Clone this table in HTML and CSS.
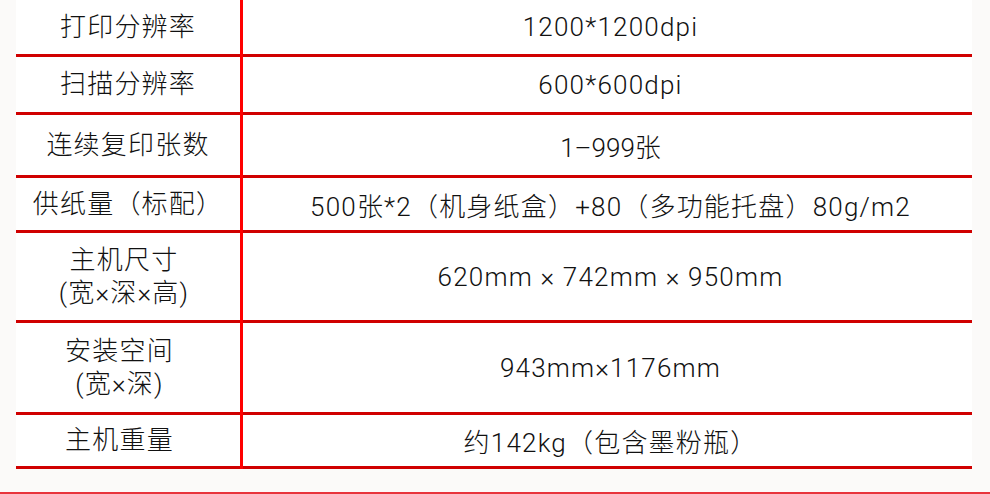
FILE: index.html
```html
<!DOCTYPE html>
<html lang="zh-CN">
<head>
<meta charset="utf-8">
<title>参数表</title>
<link rel="stylesheet" href="styles.css">
</head>
<body>
<div class="page">
  <div class="spec">
    <div class="row r1"><div class="key">打印分辨率</div><div class="val">1200*1200dpi</div></div>
    <div class="row r2"><div class="key">扫描分辨率</div><div class="val">600*600dpi</div></div>
    <div class="row r3"><div class="key">连续复印张数</div><div class="val tight">1–999张</div></div>
    <div class="row r4"><div class="key">供纸量（标配）</div><div class="val">500张*2（机身纸盒）+80（多功能托盘）80g/m2</div></div>
    <div class="row r5"><div class="key shift-s">主机尺寸<br>(宽×深×高)</div><div class="val">620mm × 742mm × 950mm</div></div>
    <div class="row r6"><div class="key shift-l">安装空间<br>(宽×深)</div><div class="val">943mm×1176mm</div></div>
    <div class="row r7"><div class="key shift-l">主机重量</div><div class="val">约142kg（包含墨粉瓶）</div></div>
    <div class="divider"></div>
  </div>
  <div class="foot"></div>
</div>
</body>
</html>
```
FILE: styles.css
```css
html, body {
  margin: 0;
  padding: 0;
}
body {
  background: #fbfaf9;
  font-family: "Roboto", "Noto Sans CJK SC", sans-serif;
  font-weight: 300;
  color: #111111;
  width: 990px;
  height: 494px;
  overflow: hidden;
}
.page {
  display: flex;
  flex-direction: column;
  height: 494px;
}
.spec {
  position: relative;
  margin-left: 16px;
  width: 956px;
  background: #ffffff;
  display: flex;
  flex-direction: column;
}
.row {
  display: flex;
  border-bottom: 3px solid #d00000;
  font-size: 26px;
  letter-spacing: 1.2px;
}
.key {
  width: 224px;
  flex: none;
  box-sizing: border-box;
  display: flex;
  align-items: center;
  justify-content: center;
  text-align: center;
  line-height: 33px;
}
.shift-s { padding-right: 8px; }
.shift-l { padding-right: 17px; }
.val {
  flex: 1;
  margin-left: 3px;
  padding-left: 6px;
  display: flex;
  align-items: center;
  justify-content: center;
  text-align: center;
}
.tight { letter-spacing: 0; }
.r1 { height: 54px; }
.r2 { height: 55px; }
.r3 { height: 60px; }
.r4 { height: 52px; }
.r5 { height: 87px; }
.r6 { height: 89px; }
.r7 { height: 51px; }
.divider {
  position: absolute;
  left: 224px;
  top: 0;
  width: 3px;
  height: 469px;
  background: #ff0000;
}
.foot {
  margin-top: auto;
  height: 2px;
  background: #e8343c;
}
```
